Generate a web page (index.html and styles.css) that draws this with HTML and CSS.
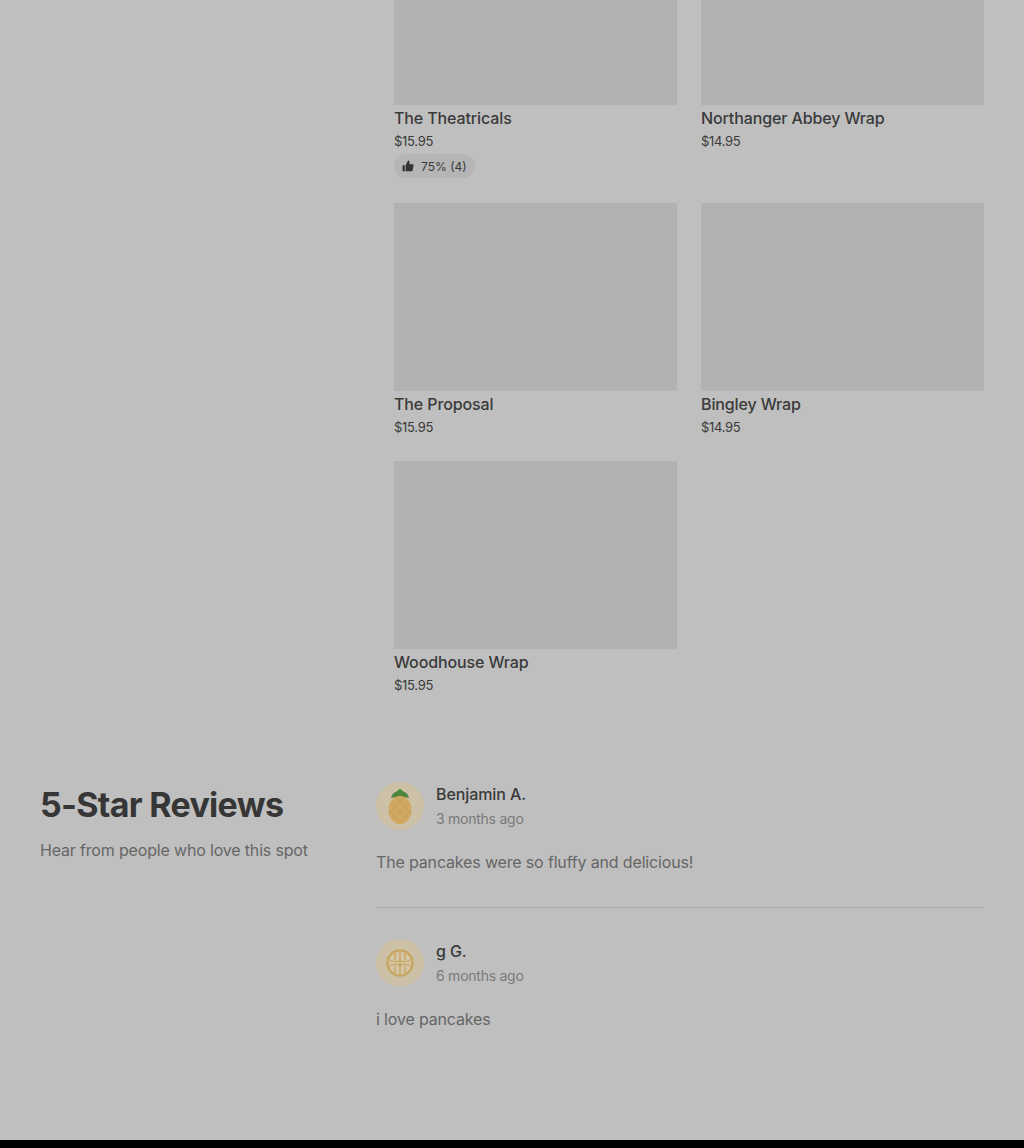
FILE: index.html
```html
<!DOCTYPE html>
<html lang="en">
<head>
    <meta charset="UTF-8">
    <meta name="viewport" content="width=device-width, initial-scale=1.0">
    <link rel="stylesheet" href="styles.css">
    <title>Menu and reviews</title>
</head>
<body>
    <!-- menu items -->
    <div class="menu">
        <div class="item">
            <div class="pic pic-cut"></div>
            <div class="name">The Theatricals</div>
            <div class="price">$15.95</div>
            <div class="rating">
                <svg class="thumb" viewBox="0 0 12 12"><path d="M0.5 5.200h2.300v6H0.500z M3.600 5.200 6 0.600c0.900 0 1.500 0.600 1.500 1.500V4.300h3c0.700 0 1.100 0.600 1 1.200l-0.900 4.800c-0.100 0.500-0.500 0.900-1 0.900H3.600z"/></svg>
                <span>75% (4)</span>
            </div>
        </div>
        <div class="item">
            <div class="pic pic-cut"></div>
            <div class="name">Northanger Abbey Wrap</div>
            <div class="price">$14.95</div>
        </div>
        <div class="item">
            <div class="pic"></div>
            <div class="name">The Proposal</div>
            <div class="price">$15.95</div>
        </div>
        <div class="item">
            <div class="pic"></div>
            <div class="name">Bingley Wrap</div>
            <div class="price">$14.95</div>
        </div>
        <div class="item">
            <div class="pic"></div>
            <div class="name">Woodhouse Wrap</div>
            <div class="price">$15.95</div>
        </div>
    </div>

    <!-- reviews -->
    <div class="reviews">
        <div class="rev-head">
            <h2 class="rev-title">5-Star Reviews</h2>
            <p class="rev-sub">Hear from people who love this spot</p>
        </div>
        <div class="rev-list">
            <div class="rev">
                <div class="who">
                    <div class="avatar">
                        <svg viewBox="0 0 48 48" width="48" height="48">
                            <path d="M24 7c-2 1-3 2-4 3-2 0-4 2-5 6 3-1 6 0 9 0s6-1 9 0c-1-4-3-6-5-6-1-1-2-2-4-3z" fill="#4f8440"/>
                            <ellipse cx="24" cy="28" rx="11.500" ry="14" fill="#d1a962"/>
                            <path d="M15 21l17 17M20 16l15 15M13 29l11 11M33 21L16 38M28 16L13 31M35 29L24 40" stroke="#c69e58" stroke-width="1" fill="none"/>
                        </svg>
                    </div>
                    <div>
                        <div class="who-name">Benjamin A.</div>
                        <div class="who-date">3 months ago</div>
                    </div>
                </div>
                <p class="rev-text">The pancakes were so fluffy and delicious!</p>
            </div>
            <div class="rev rev-last">
                <div class="who">
                    <div class="avatar">
                        <svg viewBox="0 0 48 48" width="48" height="48">
                            <circle cx="24" cy="24" r="12.500" fill="#d3c6a4" stroke="#c9a562" stroke-width="2.500"/>
                            <path d="M24 13v22M14 21.500c4 1.500 7 1.500 10 0 3 1.500 6 1.500 10 0M14 26.500c4-1.500 7-1.500 10 0 3-1.500 6-1.500 10 0M19 14v7M29 14v7M19 27v7M29 27v7" stroke="#c9a562" stroke-width="1.300" fill="none"/>
                        </svg>
                    </div>
                    <div>
                        <div class="who-name">g G.</div>
                        <div class="who-date">6 months ago</div>
                    </div>
                </div>
                <p class="rev-text">i love pancakes</p>
            </div>
        </div>
    </div>

    <div class="foot"></div>
</body>
</html>
```

FILE: styles.css
```css
*{
    margin: 0;
    padding: 0;
    box-sizing: border-box;
}
html{
    background-color: #bfbfbf;
}
body{
    height: 1148px;
    width: 100%;
    overflow: hidden;
    display: flex;
    flex-direction: column;
    background-color: #bfbfbf;
    font-family: 'Inter', sans-serif;
    color: #333333;
}
.menu{
    display: grid;
    grid-template-columns: 283px 283px;
    column-gap: 24px;
    row-gap: 24px;
    padding-left: 394px;
    height: 782px;
    align-content: start;
}
.item{
    padding-bottom: 1px;
}
.pic{
    height: 188px;
    background-color: #b2b2b2;
}
.pic-cut{
    height: 105px;
}
.name{
    margin-top: 3px;
    font-size: 16px;
    line-height: 20px;
    font-weight: 500;
    letter-spacing: -0.12px;
    color: #3a3a3a;
}
.price{
    margin-top: 4px;
    font-size: 13px;
    line-height: 18px;
    letter-spacing: -0.3px;
    color: #3a3a3a;
}
.rating{
    display: inline-flex;
    align-items: center;
    gap: 7px;
    height: 24px;
    margin-top: 4px;
    padding: 0 8px;
    border-radius: 12px;
    background-color: #b5b5b5;
    font-size: 12px;
    color: #3a3a3a;
}
.thumb{
    width: 12px;
    height: 12px;
    fill: #333333;
}
.reviews{
    display: flex;
    padding-left: 40px;
    padding-right: 40px;
    flex: 1;
}
.rev-head{
    width: 336px;
}
.rev-title{
    margin-top: 1px;
    font-size: 34px;
    line-height: 44px;
    font-weight: 700;
    letter-spacing: -0.7px;
    color: #363636;
}
.rev-sub{
    margin-top: 12px;
    font-size: 16px;
    line-height: 22px;
    letter-spacing: -0.17px;
    color: #666666;
}
.rev-list{
    width: 608px;
}
.rev{
    padding-bottom: 34px;
    margin-bottom: 31px;
    border-bottom: 1px solid #adadad;
}
.rev-last{
    border-bottom: none;
    margin-bottom: 0;
}
.who{
    display: flex;
    align-items: center;
    gap: 12px;
}
.avatar{
    width: 48px;
    height: 48px;
    border-radius: 50%;
    background-color: #ccc0a6;
    overflow: hidden;
}
.who-name{
    font-size: 16px;
    line-height: 22px;
    font-weight: 500;
    letter-spacing: -0.1px;
    color: #3a3a3a;
}
.who-date{
    margin-top: 4px;
    font-size: 14px;
    line-height: 20px;
    letter-spacing: -0.25px;
    color: #7a7a7a;
}
.rev-text{
    margin-top: 21px;
    font-size: 16px;
    line-height: 22px;
    letter-spacing: -0.16px;
    color: #666666;
}
.foot{
    height: 8px;
    background-color: #000000;
}
```
